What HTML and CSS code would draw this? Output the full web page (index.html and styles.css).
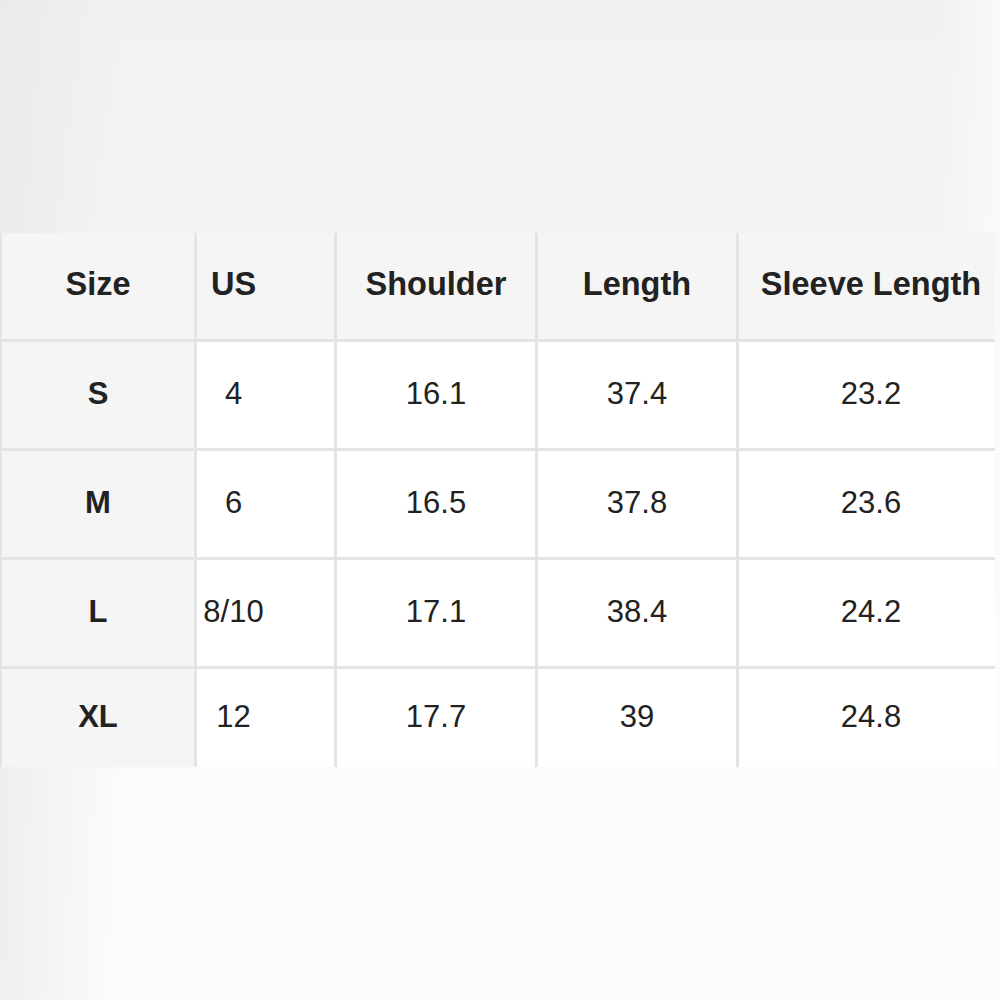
FILE: index.html
```
<!DOCTYPE html>
<html lang="en">
<head>
<meta charset="utf-8">
<title>Size Chart</title>
<link rel="stylesheet" href="styles.css">
</head>
<body>
<main class="page">
  <div class="chart" role="table">
    <div class="cell head">Size</div>
    <div class="cell head us">US</div>
    <div class="cell head">Shoulder</div>
    <div class="cell head">Length</div>
    <div class="cell head last">Sleeve Length</div>

    <div class="cell label">S</div>
    <div class="cell us">4</div>
    <div class="cell">16.1</div>
    <div class="cell">37.4</div>
    <div class="cell last">23.2</div>

    <div class="cell label">M</div>
    <div class="cell us">6</div>
    <div class="cell">16.5</div>
    <div class="cell">37.8</div>
    <div class="cell last">23.6</div>

    <div class="cell label">L</div>
    <div class="cell us">8/10</div>
    <div class="cell">17.1</div>
    <div class="cell">38.4</div>
    <div class="cell last">24.2</div>

    <div class="cell label">XL</div>
    <div class="cell us">12</div>
    <div class="cell">17.7</div>
    <div class="cell">39</div>
    <div class="cell last">24.8</div>
  </div>
</main>
</body>
</html>
```

FILE: styles.css
```
html, body {
  margin: 0;
  padding: 0;
  width: 1000px;
  height: 1000px;
}

body {
  background:
    linear-gradient(to right, rgba(230,230,230,0.6) 0px, rgba(240,240,240,0) 120px, rgba(240,240,240,0) 940px, rgba(252,252,252,0.7) 1000px),
    linear-gradient(to bottom, #f1f1f1 0px, #f3f3f3 200px, #f8f8f8 500px, #fbfbfb 800px, #fcfcfc 1000px);
  font-family: "Liberation Sans", Arial, sans-serif;
  color: #222;
}

.page {
  padding-top: 233px;
}

.chart {
  width: 993px;
  display: grid;
  grid-template-columns: 192px 137px 198px 198px 256px;
  grid-template-rows: 106px 106px 106px 106px 98px;
  column-gap: 3px;
  row-gap: 3px;
  padding-left: 2px;
  background: #e4e4e4;
}

.cell {
  display: flex;
  align-items: center;
  justify-content: center;
  padding-bottom: 3px;
  background: #ffffff;
  font-size: 31px;
  line-height: 1;
}

.head {
  background: #f5f5f5;
  font-weight: bold;
  font-size: 32.5px;
}

.label {
  background: #f5f5f5;
  font-weight: bold;
}

.us {
  padding-right: 64px;
}

.last {
  padding-left: 8px;
}
```
